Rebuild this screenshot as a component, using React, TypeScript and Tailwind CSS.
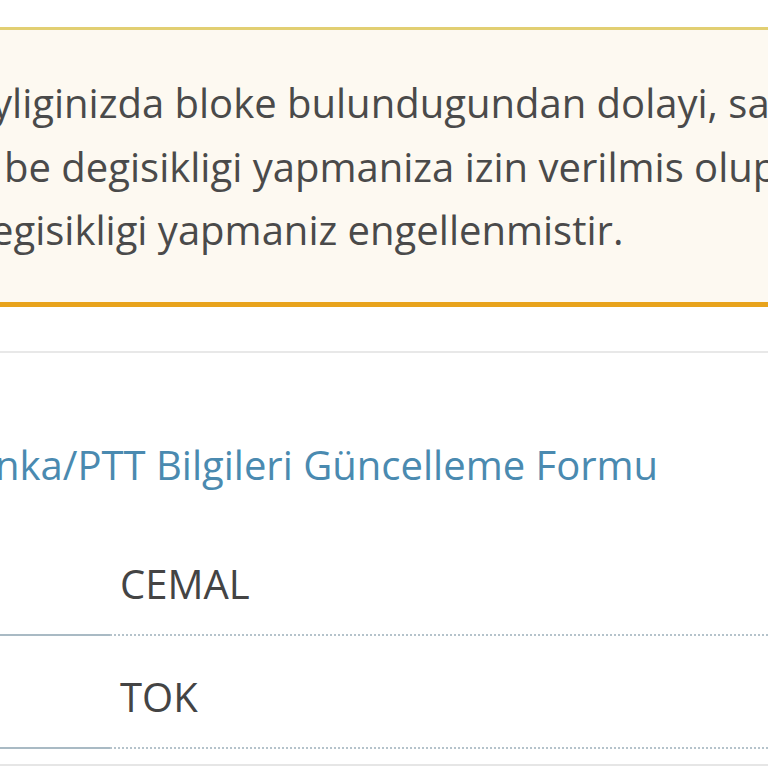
export default function App() {
  const font = { fontFamily: '"Open Sans", "Noto Sans", sans-serif' };
  return (
    <div className="w-[768px] h-[768px] overflow-hidden bg-white" style={font}>
      <div className="pt-[27px]">
        <div className="border-t-[3px] border-b-[5px] border-t-[#e2cf72] border-b-[#e8a31c] bg-[#fdf9f1] pt-[41px] pb-[40px] text-[40px] leading-[63.5px] text-[#4a4a4a]">
          <div className="whitespace-nowrap ml-[-8px]">yliginizda bloke bulundugundan dolayi, sa</div>
          <div className="whitespace-nowrap ml-[4px]">be degisikligi yapmaniza izin verilmis olup</div>
          <div className="whitespace-nowrap ml-[-9px]">egisikligi yapmaniz engellenmistir.</div>
        </div>
      </div>
      <div className="mt-[44px] border-t-2 border-[#e8e8e8]">
        <div className="pt-[82px] text-[40px] leading-[60px] text-[#4a8ab0] whitespace-nowrap ml-[-5px]">
          nka/PTT Bilgileri Güncelleme Formu
        </div>
        <div className="mt-[28px]">
          {["CEMAL", "TOK"].map((v) => (
            <div key={v} className="flex">
              <div className="w-[110px] shrink-0 border-b-2 border-solid border-[#a9bac4]" />
              <div className="flex-1 border-b-2 border-dotted border-[#b5c3cb] pl-[10px] pt-[31px] pb-[20px] text-[40px] leading-[60px] text-[#444444]">
                {v}
              </div>
            </div>
          ))}
        </div>
        <div className="mt-[15px] border-t-2 border-[#e6e6e6]" />
      </div>
    </div>
  );
}
